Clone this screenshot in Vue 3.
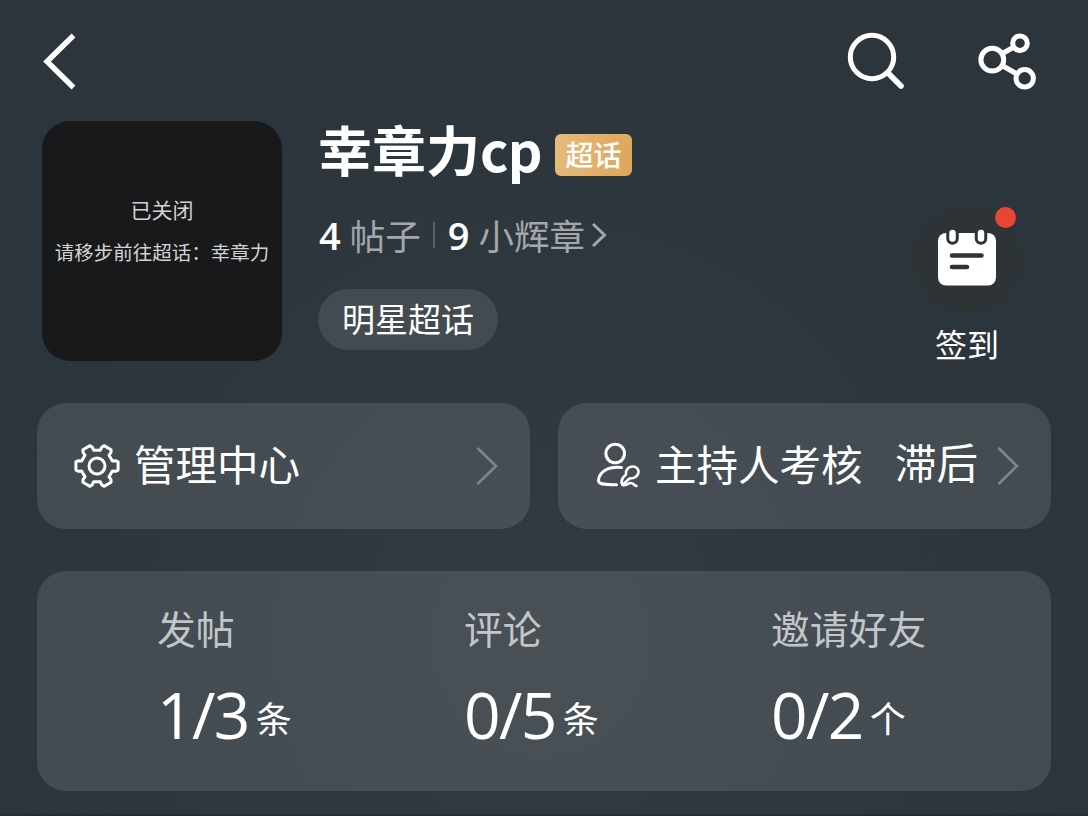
<template>
  <div class="page">
    <!-- 顶部导航 -->
    <header class="nav">
      <svg class="icon-back" width="36" height="60" viewBox="0 0 36 60">
        <path d="M31.500 5.500L5 31.500L31.500 57.500" />
      </svg>
      <div class="nav-actions">
        <svg width="60" height="60" viewBox="0 0 60 60">
          <circle cx="26" cy="27" r="21.700" stroke-width="5" />
          <path d="M42 43L55 56" stroke-width="5.600" stroke-linecap="round" />
        </svg>
        <svg width="60" height="60" viewBox="0 0 60 60">
          <circle cx="14.300" cy="29.700" r="11.400" stroke-width="5" />
          <circle cx="42" cy="13.200" r="7.300" stroke-width="5" />
          <circle cx="46.700" cy="48.300" r="8.700" stroke-width="5" />
          <path d="M24.500 23.500L35 17.500M25 36L38 43.500" stroke-width="5" />
        </svg>
      </div>
    </header>

    <!-- 超话信息 -->
    <section class="profile">
      <div class="avatar">
        <p class="avatar-title">已关闭</p>
        <p class="avatar-desc">请移步前往超话：幸章力</p>
      </div>

      <div class="info">
        <div class="title-row">
          <h1>幸章力<span class="latin">cp</span></h1>
          <span class="badge">超话</span>
        </div>
        <div class="counts">
          <b>4</b><span>帖子</span>
          <i class="divider"></i>
          <b>9</b><span>小辉章</span>
          <svg width="16" height="26" viewBox="0 0 16 26">
            <path d="M2 2L13.500 13L2 24" />
          </svg>
        </div>
        <div class="tag">明星超话</div>
      </div>

      <div class="checkin">
        <div class="checkin-icon">
          <svg width="60" height="58" viewBox="0 0 60 58">
            <rect x="1" y="4" width="58" height="52.500" rx="8" fill="#fff" />
            <path d="M15.500 4.500V9.500M44 4.500V9.500" class="ring-gap" />
            <path d="M15.500 4V9.500M44 4V9.500" class="ring-pin" />
            <path d="M15 26.500H44.500M15 38H30" class="lines" />
          </svg>
          <span class="dot"></span>
        </div>
        <span class="checkin-text">签到</span>
      </div>
    </section>

    <!-- 管理入口 -->
    <section class="entries">
      <div class="card entry">
        <svg class="entry-icon" width="50" height="50" viewBox="-25 -25 50 50">
          <path :d="gearPath" />
          <circle r="8" />
        </svg>
        <span class="entry-name">管理中心</span>
        <svg class="arrow" width="22" height="40" viewBox="0 0 22 40">
          <path d="M1.500 2L20 20L1.500 38" />
        </svg>
      </div>
      <div class="card entry">
        <svg class="entry-icon" width="50" height="50" viewBox="0 0 50 50">
          <circle cx="22.200" cy="12.500" r="9.300" />
          <path d="M28.500 26.500C15 25 6 31 5.500 39.500C5.500 43 10 43.700 23.500 43.700" />
          <path class="pen" d="M29.500 44C27.500 41 28 38 33 33.500C32.500 28.500 35.500 25.500 39.500 25.500C43.500 25.500 46 28.500 45.500 31.500C44.500 36 40.500 37.500 36.500 37.500L29.500 44C33.500 45 35 42 38 42C40.500 42 41 44.500 43.500 45" />
        </svg>
        <span class="entry-name">主持人考核</span>
        <span class="entry-status">滞后</span>
        <svg class="arrow" width="22" height="40" viewBox="0 0 22 40">
          <path d="M1.500 2L20 20L1.500 38" />
        </svg>
      </div>
    </section>

    <!-- 任务进度 -->
    <section class="card tasks">
      <div v-for="task in tasks" :key="task.name" class="task">
        <div class="task-name">{{ task.name }}</div>
        <div class="task-value">
          <span class="num">{{ task.done }}/{{ task.total }}</span>
          <span class="unit">{{ task.unit }}</span>
        </div>
      </div>
    </section>
  </div>
</template>

<script setup>
const tasks = [
  { name: '发帖', done: 1, total: 3, unit: '条' },
  { name: '评论', done: 0, total: 5, unit: '条' },
  { name: '邀请好友', done: 0, total: 2, unit: '个' },
]

// 齿轮轮廓：6 个齿，每个齿由 [半径, 角度] 组成
const tooth = [[16.2, -18], [19.3, -16], [21.5, -11], [21.5, 11], [19.3, 16], [16.2, 18]]

function buildGear() {
  const points = []
  for (let i = 0; i < 6; i++) {
    for (const [r, deg] of tooth) {
      const a = ((deg + i * 60) * Math.PI) / 180
      points.push(`${(r * Math.cos(a)).toFixed(2)} ${(r * Math.sin(a)).toFixed(2)}`)
    }
  }
  return `M${points.join('L')}Z`
}

const gearPath = buildGear()
</script>

<style>
body {
  margin: 0;
  background: #2b343a;
}
</style>

<style scoped>
.page {
  box-sizing: border-box;
  height: 816px;
  padding: 30px 37px 0;
  overflow: hidden;
  color: #fff;
  font-family: "Noto Sans CJK SC", sans-serif;
  background: radial-gradient(ellipse 560px 600px at 540px 640px, #333b42, #2b353b);
  border-bottom: 2px solid #262c33;
}

svg {
  display: block;
  flex-shrink: 0;
  fill: none;
  stroke: #fff;
}

.nav {
  display: flex;
  justify-content: space-between;
  height: 91px;
  padding: 0 13px 0 5px;
}
.icon-back {
  stroke-width: 5.4;
}
.nav-actions {
  display: flex;
  gap: 72px;
}

.profile {
  display: flex;
  height: 282px;
  padding-left: 5px;
}

.avatar {
  width: 240px;
  height: 240px;
  flex-shrink: 0;
  border-radius: 28px;
  background: #17191a;
  color: #d2d2d2;
  text-align: center;
  white-space: nowrap;
}
.avatar p {
  margin: 0;
}
.avatar-title {
  padding-top: 72px;
  font-size: 21px;
  line-height: 32px;
}
.avatar-desc {
  padding-top: 12px;
  font-size: 19.5px;
  line-height: 30px;
}

.info {
  flex: 1;
  padding-left: 37px;
}
.title-row {
  display: flex;
  align-items: flex-start;
  gap: 13px;
}
h1 {
  margin: 0 0 0 -1px;
  font-size: 54px;
  font-weight: 700;
  line-height: 55px;
  white-space: nowrap;
}
.latin {
  letter-spacing: -0.6px;
}
.badge {
  width: 77px;
  height: 42px;
  margin-top: 13px;
  border-radius: 6px;
  background: linear-gradient(100deg, #e6bb7c, #dda65b);
  font-size: 28px;
  font-weight: 500;
  line-height: 40px;
  text-align: center;
}

.counts {
  display: flex;
  align-items: center;
  height: 50px;
  margin-top: 34px;
  font-size: 35.5px;
  line-height: 50px;
  color: #a3a7aa;
}
.counts b {
  font-family: "Open Sans", "Noto Sans CJK SC", sans-serif;
  font-size: 38px;
  font-weight: 600;
  color: #fff;
}
.counts span {
  margin-left: 9px;
}
.counts svg {
  margin-left: 6px;
  stroke: #a3a7aa;
  stroke-width: 3;
}
.divider {
  width: 2px;
  height: 26px;
  margin: 0 13px 0 12px;
  background: #596066;
}

.tag {
  width: 180px;
  height: 61px;
  margin: 29px 0 0 -1px;
  border-radius: 31px;
  background: #434b51;
  font-size: 33px;
  line-height: 59px;
  text-align: center;
}

.checkin {
  display: flex;
  flex-direction: column;
  align-items: center;
  width: 110px;
  margin-right: 29px;
  padding-top: 84px;
}
.checkin-icon {
  position: relative;
  display: flex;
  justify-content: center;
  width: 110px;
  height: 110px;
  border-radius: 50%;
  background: radial-gradient(circle closest-side, #2e3336 88%, #2c343a);
}
.checkin-icon svg {
  margin-top: 24px;
  stroke: none;
  stroke-linecap: round;
}
.checkin-icon .ring-gap {
  stroke: #2e3336;
  stroke-width: 12.5;
}
.checkin-icon .ring-pin {
  stroke: #fff;
  stroke-width: 6.5;
}
.checkin-icon .lines {
  stroke: #2e3336;
  stroke-width: 4.5;
}
.dot {
  position: absolute;
  top: 2px;
  right: 6px;
  width: 21px;
  height: 21px;
  border-radius: 50%;
  background: #ea4435;
}
.checkin-text {
  margin-top: 8px;
  font-size: 32px;
  line-height: 40px;
}

.card {
  border-radius: 29px;
  background: rgba(255, 255, 255, 0.11);
}

.entries {
  display: flex;
  gap: 28px;
}
.entry {
  box-sizing: border-box;
  display: flex;
  align-items: center;
  width: 493px;
  height: 126px;
  padding: 0 32px 0 35px;
  font-size: 41.5px;
  line-height: 60px;
}
.entry-icon {
  margin-right: 12px;
  stroke-width: 3;
  stroke-linejoin: round;
  stroke-linecap: round;
}
.entry-icon .pen {
  stroke-width: 2.6;
}
.entry-name,
.entry-status {
  margin-top: -7px;
}
.entry-status {
  margin-left: auto;
  margin-top: -10px;
}
.arrow {
  margin-left: auto;
  stroke: #7f868a;
  stroke-width: 2.6;
}
.entry-status + .arrow {
  margin-left: 19px;
}

.tasks {
  box-sizing: border-box;
  display: grid;
  grid-template-columns: 307px 307px 1fr;
  height: 220px;
  margin-top: 42px;
  padding: 31px 0 0 120px;
}
.task-name {
  font-size: 38.8px;
  line-height: 50px;
  color: #c2c6c8;
}
.task-value {
  display: flex;
  align-items: center;
  height: 90px;
  margin-top: 18px;
}
.num {
  font-family: "Open Sans", "Noto Sans CJK SC", sans-serif;
  font-size: 64px;
  font-weight: 500;
  line-height: 90px;
  letter-spacing: -1.6px;
}
.unit {
  padding-top: 3px;
  margin-left: 7px;
  font-size: 36px;
  line-height: 50px;
}
</style>
